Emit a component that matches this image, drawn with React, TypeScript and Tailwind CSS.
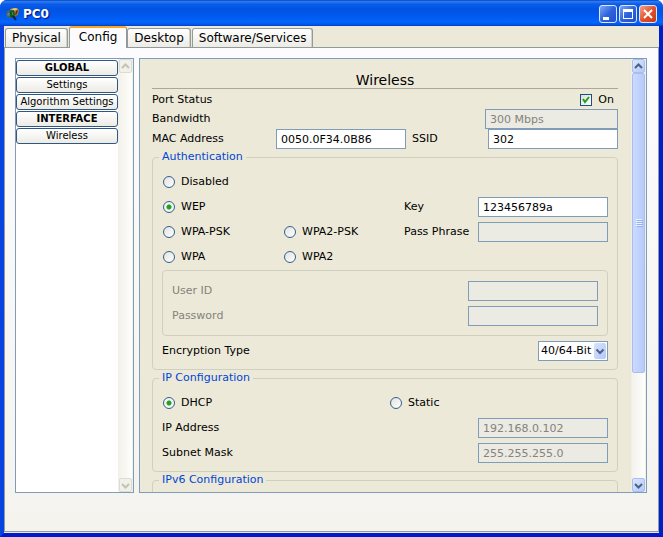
import { useState } from 'react';
import type { ReactNode } from 'react';

const TABS = ['Physical', 'Config', 'Desktop', 'Software/Services'];

const SIDE_ITEMS = [
  { label: 'GLOBAL', heading: true },
  { label: 'Settings', heading: false },
  { label: 'Algorithm Settings', heading: false },
  { label: 'INTERFACE', heading: true },
  { label: 'Wireless', heading: false },
];

export default function App() {
  const [tab, setTab] = useState('Config');

  return (
    <div className="h-screen bg-white font-['DejaVu_Sans',Verdana,sans-serif] text-[11px] leading-4 text-black">
      <div className="flex h-full flex-col overflow-hidden rounded-t-[7px] bg-[#0a3fe0]">
        <TitleBar />
        <div className="flex min-h-0 flex-1 flex-col border-x-4 border-b-4 border-t-0 border-b-[#0019cf] border-l-[#0842e0] border-r-[#001fc8] bg-[#ece9d8] pb-px">
          <nav className="flex h-[21px] items-end px-px">
            {TABS.map((name) => (
              <Tab key={name} name={name} active={name === tab} onClick={() => setTab(name)} />
            ))}
          </nav>
          <div className="flex min-h-0 flex-1 gap-[5px] border border-[#919b9c] bg-linear-to-b from-[#fcfcfe] to-[#f4f3ee] pt-[10px] pr-[11px] pb-[38px] pl-[10px]">
            <Sidebar />
            <main className="flex min-w-0 flex-1 border border-[#7f9db9] bg-[#ece9d8]">
              <div className="min-w-0 flex-1 overflow-hidden pr-[13px] pl-3">
                <WirelessForm />
              </div>
              <ScrollBar enabled />
            </main>
          </div>
        </div>
      </div>
    </div>
  );
}

function TitleBar() {
  return (
    <header className="flex h-[26px] shrink-0 items-center bg-[linear-gradient(180deg,#0540c8_0%,#2c7cf0_6%,#0a5ce8_16%,#0054e3_35%,#0058ee_60%,#0465fd_85%,#0355e6_94%,#0040c0_100%)] pt-[2px] pr-[6px] pl-[6px]">
      <AppIcon />
      <h1 className="ml-1 flex-1 text-[12px] font-bold text-white [text-shadow:1px_1px_1px_#0f1089]">PC0</h1>
      <div className="flex gap-[2px]">
        <WindowButton label="Minimize">
          <path d="M4 12h6v3H4z" fill="#fff" />
        </WindowButton>
        <WindowButton label="Maximize">
          <path d="M4 4h10v10H4z M5 7v6h8V7z" fill="#fff" fillRule="evenodd" />
        </WindowButton>
        <WindowButton label="Close" close>
          <path d="M5 5l8 8M13 5l-8 8" stroke="#fff" strokeWidth="2" />
        </WindowButton>
      </div>
    </header>
  );
}

function WindowButton({ label, close, children }: { label: string; close?: boolean; children: ReactNode }) {
  return (
    <button
      aria-label={label}
      className={`h-[18px] w-[18px] overflow-hidden rounded-[3px] border border-[#dfe8fb] ${close ? 'bg-linear-to-br from-[#f0a088] via-[#e2522c] to-[#c43a12]' : 'bg-linear-to-br from-[#7fa5f5] via-[#2f63dd] to-[#1f4fd0]'}`}
    >
      <svg viewBox="1 1 16 16" className="block h-4 w-4">
        {children}
      </svg>
    </button>
  );
}

function AppIcon() {
  return (
    <svg viewBox="0 0 13 13" className="h-[13px] w-[13px]" aria-hidden="true">
      <path d="M4 1l7-1 2 2-1 5-4 1-4-3z" fill="#a87a35" />
      <path d="M5 1l4-1 3 1-4 2z" fill="#e6c67c" />
      <path d="M10 3l2-1-1 4-2 1z" fill="#54380f" />
      <circle cx="4" cy="6" r="4" fill="#3d6478" />
      <path d="M4 3l4-1 1 5-3 3-3-2z" fill="#12581e" />
      <path d="M1 7l2-3 1 4z" fill="#5f8ba0" />
      <path d="M6 4l1 3" stroke="#3f9c34" />
      <path d="M7 8l3 4" stroke="#13222b" strokeWidth="2" />
    </svg>
  );
}

function Tab({ name, active, onClick }: { name: string; active: boolean; onClick: () => void }) {
  return (
    <button
      onClick={onClick}
      className={
        active
          ? 'relative z-10 -mb-px h-[22px] rounded-t-[3px] border-x border-t-2 border-x-[#919b9c] border-t-[#f9a528] bg-[#fcfcfe] px-[9px] pb-[2px] text-[12px]'
          : 'mr-px h-[19px] rounded-t-[3px] border border-b-0 border-[#919b9c] bg-linear-to-b from-white to-[#ecebe5] px-[6px] text-[12px] shadow-[inset_-1px_0_0_#d5d3c8]'
      }
    >
      {name}
    </button>
  );
}

function Sidebar() {
  return (
    <aside className="flex w-[119px] shrink-0 border border-[#7f9db9] bg-white">
      <div className="flex min-w-0 flex-1 flex-col gap-px pt-px">
        {SIDE_ITEMS.map((item) => (
          <button
            key={item.label}
            className={`h-4 rounded-[3px] border border-[#2f5782] bg-linear-to-b from-white to-[#ecebe5] text-[10px] leading-[14px] whitespace-nowrap ${item.heading ? 'font-bold' : ''}`}
          >
            {item.label}
          </button>
        ))}
      </div>
      <ScrollBar />
    </aside>
  );
}

function ScrollBar({ enabled }: { enabled?: boolean }) {
  return (
    <div className="flex w-[15px] shrink-0 flex-col border-x border-[#f0efe8] bg-linear-to-r from-[#f3f2ec] to-[#fefefb]">
      <ScrollButton enabled={enabled} label="Scroll up">
        <path d="M3 8l3.500-3.500L10 8" />
      </ScrollButton>
      <div className="min-h-0 flex-1">
        {enabled && (
          <div className="flex h-[74%] flex-col items-center justify-center gap-px rounded-[2px] border border-[#a8bdf0] bg-linear-to-r from-[#cbdafe] to-[#b7cafa]">
            <span className="h-px w-[6px] bg-[#eef4fe] shadow-[1px_1px_0_#8cb0f8]" />
            <span className="h-px w-[6px] bg-[#eef4fe] shadow-[1px_1px_0_#8cb0f8]" />
            <span className="h-px w-[6px] bg-[#eef4fe] shadow-[1px_1px_0_#8cb0f8]" />
            <span className="h-px w-[6px] bg-[#eef4fe] shadow-[1px_1px_0_#8cb0f8]" />
          </div>
        )}
      </div>
      <ScrollButton enabled={enabled} label="Scroll down">
        <path d="M3 5l3.500 3.500L10 5" />
      </ScrollButton>
    </div>
  );
}

function ScrollButton({ enabled, label, children }: { enabled?: boolean; label: string; children: ReactNode }) {
  return (
    <button
      aria-label={label}
      disabled={!enabled}
      className={`flex h-[14px] w-full items-center justify-center rounded-[2px] border ${enabled ? 'border-[#a8bdf0] bg-linear-to-br from-[#dce7ff] to-[#b4c8f8] text-[#4d6185]' : 'border-[#dddcd0] bg-[#f1f0e9] text-[#c4c3b6]'}`}
    >
      <svg viewBox="0 0 13 13" className="h-[13px] w-[13px] shrink-0" fill="none" stroke="currentColor" strokeWidth="2">
        {children}
      </svg>
    </button>
  );
}

function WirelessForm() {
  const [auth, setAuth] = useState('WEP');
  const [mode, setMode] = useState('DHCP');

  return (
    <form>
      <h2 className="h-[30px] border-b border-[#aca899] pt-3 text-center text-[14px] leading-[18px]">Wireless</h2>

      <div className="flex h-5 items-center justify-between pt-[2px] pr-1">
        <span>Port Status</span>
        <label className="flex items-center gap-[6px]">
          <span className="relative flex">
            <input type="checkbox" defaultChecked className="peer h-[12px] w-[12px] appearance-none border border-[#1c5180] bg-linear-to-br from-[#dcdcd7] to-white" />
            <svg viewBox="0 0 12 12" className="pointer-events-none absolute inset-0 h-3 w-3 opacity-0 peer-checked:opacity-100" fill="none" stroke="#21a121" strokeWidth="2">
              <path d="M3 5l2 3 4-5" />
            </svg>
          </span>
          On
        </label>
      </div>

      <div className="flex items-center justify-between">
        <label htmlFor="bandwidth">Bandwidth</label>
        <TextBox id="bandwidth" value="300 Mbps" disabled className="w-[133px]" />
      </div>

      <div className="flex items-center">
        <label htmlFor="mac" className="flex-1">MAC Address</label>
        <TextBox id="mac" value="0050.0F34.0B86" className="w-[130px]" />
        <label htmlFor="ssid" className="w-[82px] pl-[6px]">SSID</label>
        <TextBox id="ssid" value="302" className="w-[130px]" />
      </div>

      <Group title="Authentication">
        <div className="grid grid-cols-[1fr_1fr_74px_130px] gap-y-[5px] pt-[7px]">
          <Radio name="auth" label="Disabled" value={auth} onChange={setAuth} className="col-span-4" />
          <Radio name="auth" label="WEP" value={auth} onChange={setAuth} className="col-span-2" />
          <label htmlFor="key" className="self-center">Key</label>
          <TextBox id="key" value="123456789a" />
          <Radio name="auth" label="WPA-PSK" value={auth} onChange={setAuth} />
          <Radio name="auth" label="WPA2-PSK" value={auth} onChange={setAuth} />
          <label htmlFor="phrase" className="self-center whitespace-nowrap">Pass Phrase</label>
          <TextBox id="phrase" value="" disabled />
          <Radio name="auth" label="WPA" value={auth} onChange={setAuth} />
          <Radio name="auth" label="WPA2" value={auth} onChange={setAuth} />
        </div>

        <div className="mt-[3px] flex flex-col gap-[5px] rounded-[4px] border border-[#d0d0bf] px-[9px] pt-[10px] pb-[9px] text-[#85837a]">
          <div className="flex items-center justify-between">
            <label htmlFor="user">User ID</label>
            <TextBox id="user" value="" disabled className="w-[130px]" />
          </div>
          <div className="flex items-center justify-between">
            <label htmlFor="password">Password</label>
            <TextBox id="password" value="" disabled className="w-[130px]" />
          </div>
        </div>

        <div className="mt-[5px] flex items-center justify-between">
          <label htmlFor="encryption">Encryption Type</label>
          <div className="relative flex">
            <select id="encryption" className="h-5 w-[70px] appearance-none border border-[#7f9db9] bg-white pl-[2px]">
              <option>40/64-Bit</option>
            </select>
            <span className="pointer-events-none absolute inset-y-[2px] right-[2px] flex w-3 items-center justify-center rounded-[2px] bg-linear-to-br from-[#d6e2ff] to-[#b4c8f8]">
              <svg viewBox="0 0 12 12" className="h-3 w-3" fill="none" stroke="#4d6185" strokeWidth="2">
                <path d="M2.500 4.500L6 8l3.500-3.500" />
              </svg>
            </span>
          </div>
        </div>
      </Group>

      <Group title="IP Configuration">
        <div className="grid grid-cols-[1fr_219px] pt-[7px]">
          <Radio name="mode" label="DHCP" value={mode} onChange={setMode} />
          <Radio name="mode" label="Static" value={mode} onChange={setMode} />
        </div>
        <div className="mt-[5px] flex items-center justify-between">
          <label htmlFor="ip">IP Address</label>
          <TextBox id="ip" value="192.168.0.102" disabled className="w-[130px]" />
        </div>
        <div className="mt-[5px] flex items-center justify-between">
          <label htmlFor="mask">Subnet Mask</label>
          <TextBox id="mask" value="255.255.255.0" disabled className="w-[130px]" />
        </div>
      </Group>

      <Group title="IPv6 Configuration">
        <div className="h-24" />
      </Group>
    </form>
  );
}

function Group({ title, children }: { title: string; children: ReactNode }) {
  return (
    <fieldset className="min-w-0 rounded-[4px] border border-[#d0d0bf] px-[9px] pb-2">
      <legend className="-ml-[3px] px-[3px] text-[#0046d5]">{title}</legend>
      {children}
    </fieldset>
  );
}

function TextBox({ id, value, disabled, className = '' }: { id: string; value: string; disabled?: boolean; className?: string }) {
  return (
    <input
      id={id}
      type="text"
      defaultValue={value}
      disabled={disabled}
      className={`h-5 min-w-0 border border-[#7f9db9] bg-white px-1 disabled:bg-[#ebeae3] disabled:text-[#85837a] ${className}`}
    />
  );
}

function Radio({ name, label, value, onChange, className = '' }: { name: string; label: string; value: string; onChange: (v: string) => void; className?: string }) {
  return (
    <label className={`flex h-5 items-center gap-[6px] pl-px ${className}`}>
      <input
        type="radio"
        name={name}
        checked={value === label}
        onChange={() => onChange(label)}
        className="h-3 w-3 appearance-none rounded-full border border-[#33608c] bg-linear-to-br from-[#e2e2dd] to-white checked:bg-[radial-gradient(circle,#21a121_0_2px,#f4f4f0_3px)]"
      />
      {label}
    </label>
  );
}
